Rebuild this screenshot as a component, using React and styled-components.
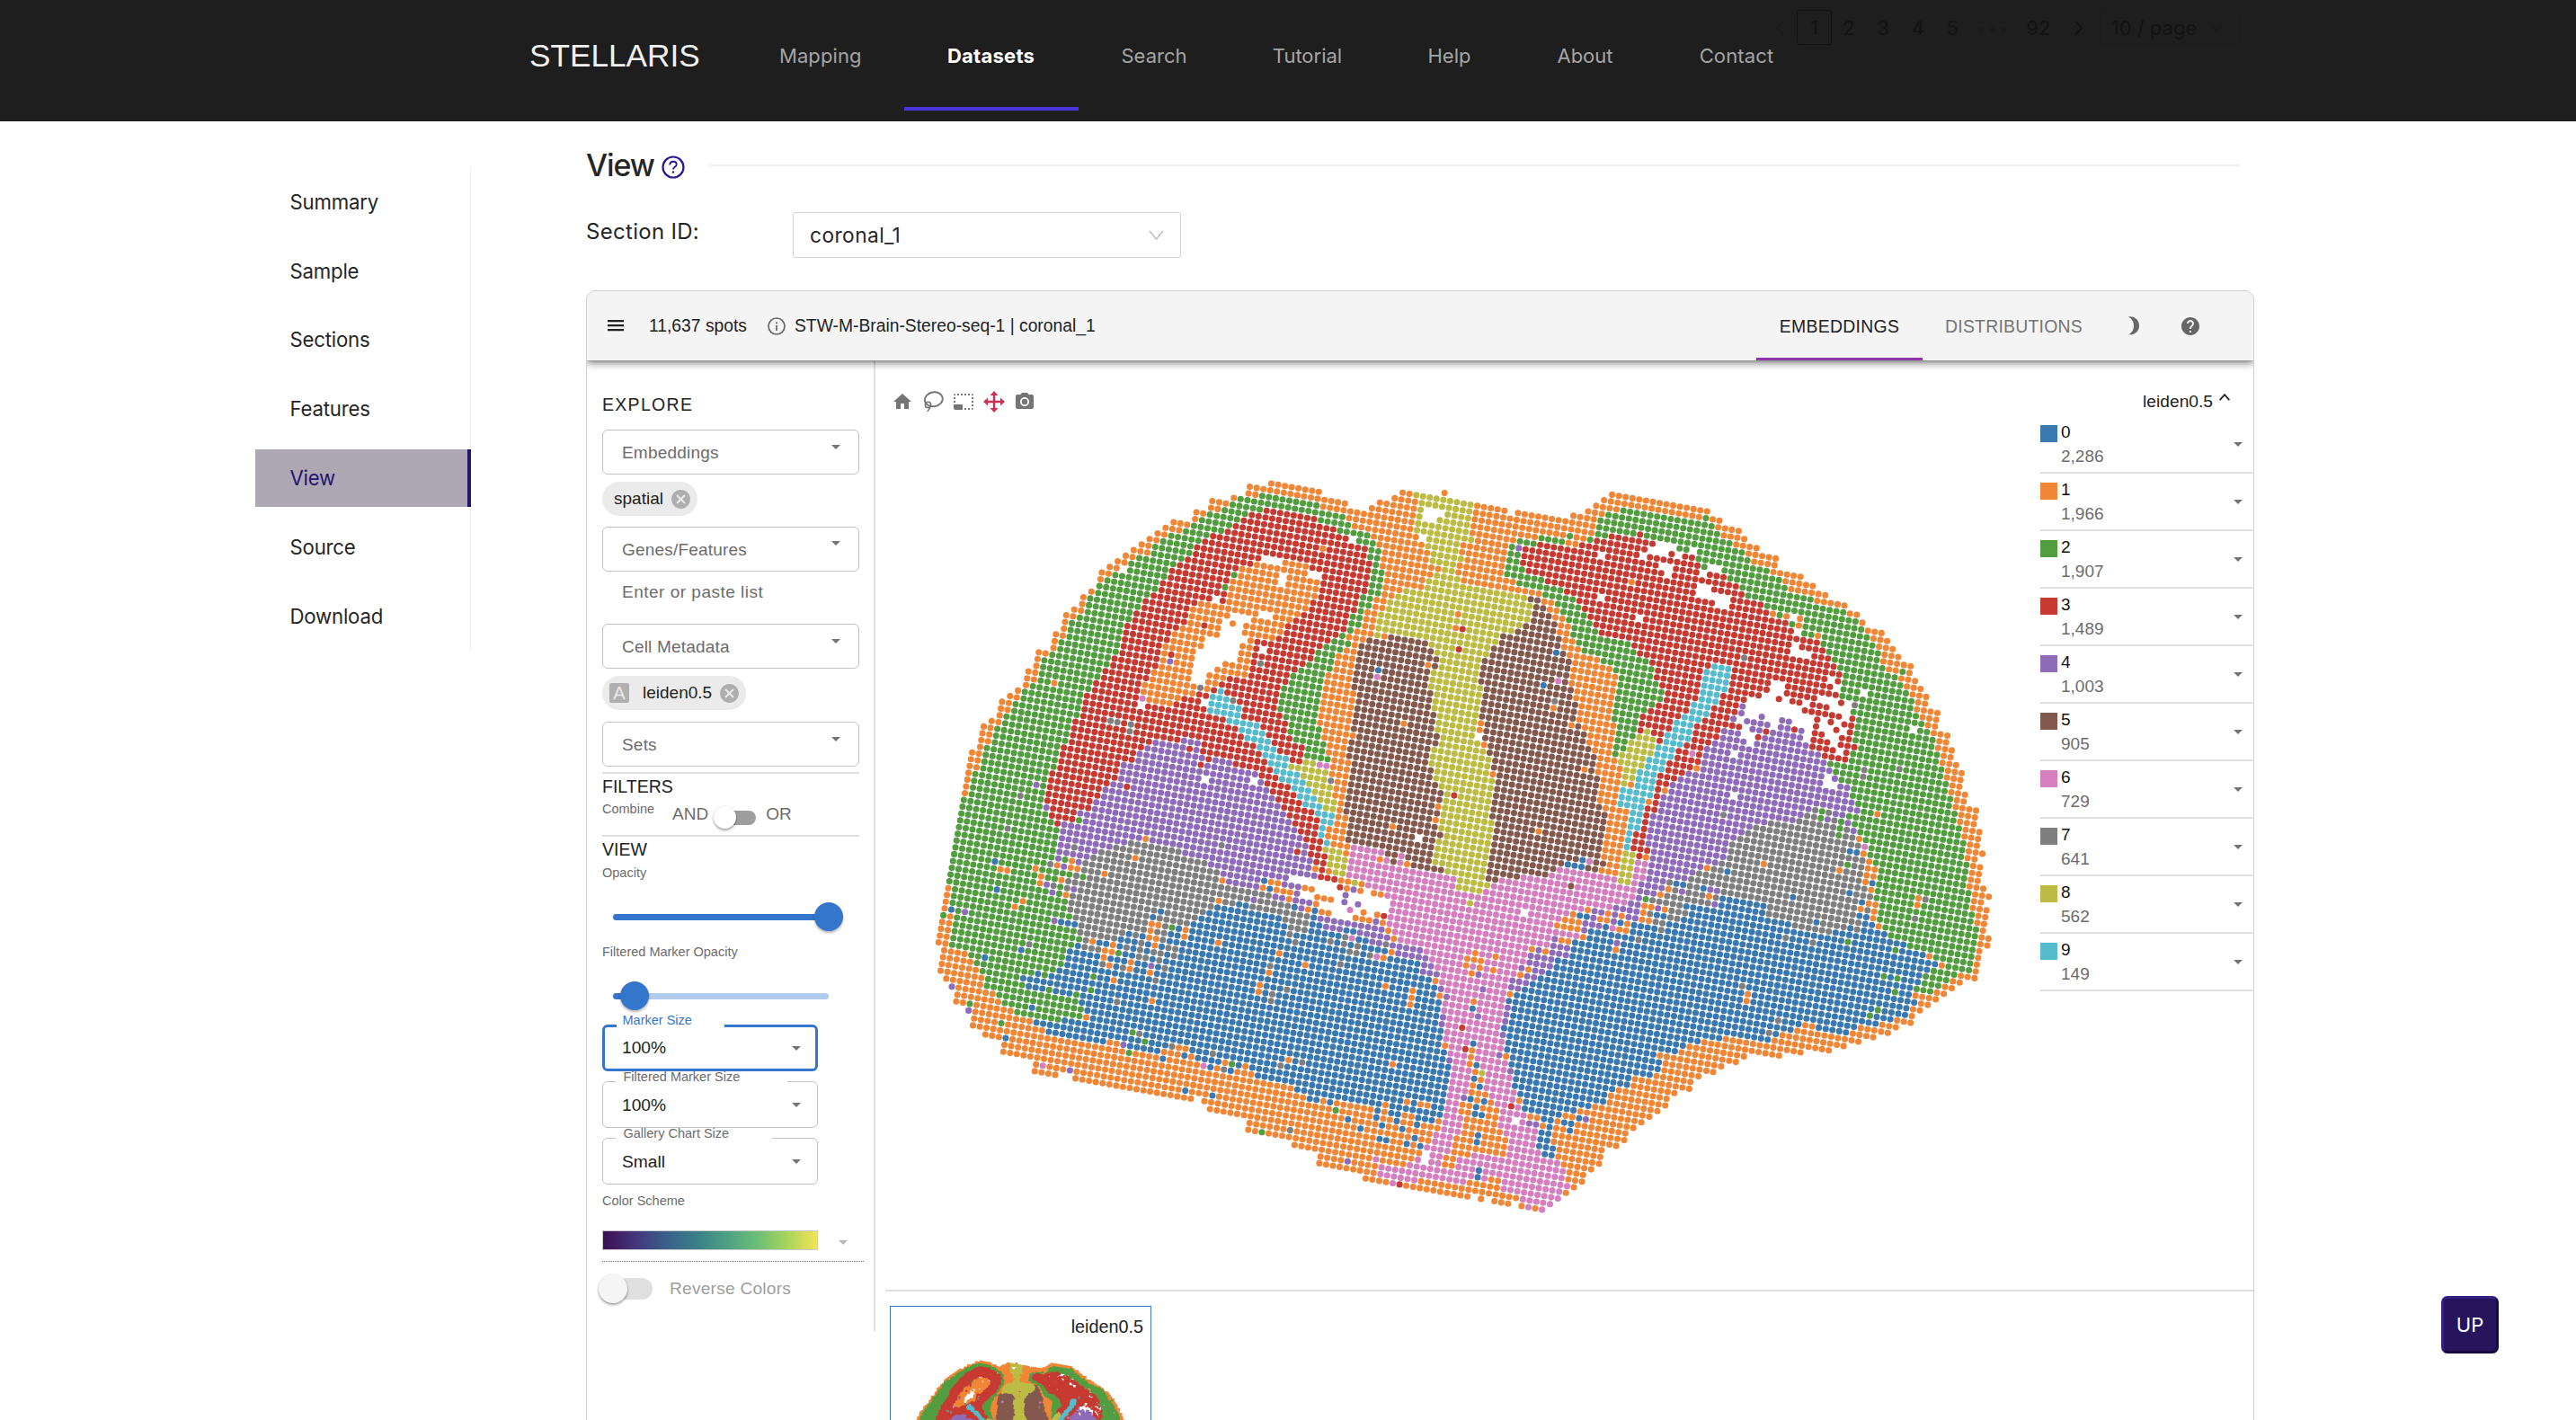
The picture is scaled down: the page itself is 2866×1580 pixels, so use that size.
import React, { useMemo } from 'react';
import styled, { createGlobalStyle, css } from 'styled-components';
import { MdHome, MdPhotoCamera, MdPhotoSizeSelectSmall, MdHelp, MdCancel } from 'react-icons/md';

/* ------------------------------------------------------------------ */
/* Spatial data: spots on a rotated square lattice, coloured by cluster */
/* ------------------------------------------------------------------ */

const CLUSTERS = [
  { id: 0, color: '#3a78b0', count: '2,286' },
  { id: 1, color: '#f08636', count: '1,966' },
  { id: 2, color: '#529d3f', count: '1,907' },
  { id: 3, color: '#c63a32', count: '1,489' },
  { id: 4, color: '#8f6cb9', count: '1,003' },
  { id: 5, color: '#84594d', count: '905' },
  { id: 6, color: '#d57fbf', count: '729' },
  { id: 7, color: '#7f7f7f', count: '641' },
  { id: 8, color: '#bcbc45', count: '562' },
  { id: 9, color: '#56bbcc', count: '149' },
];

// Slide coordinates are split in four fields; these are the field offsets.
const A = [0, 0];
const B = [1470, 0];
const C = [0, 1260];
const D = [1470, 1260];

const pts = (text, [ox, oy] = A) =>
  text
    .trim()
    .split(/\s+/)
    .map((p) => {
      const [x, y] = p.split(',').map(Number);
      return [x + ox, y + oy];
    });

const OUTLINE = [
  ...pts('150,1373 157,1330 167,1238 174,1190 182,1148 187,1124 190,1080 196,1034 203,1010 227,970 233,925 256,905 280,862 284,841 306,822 327,804 352,764 356,740 378,720 384,677 402,680 424,660 430,617 452,600 459,552 480,534 502,515 505,492 527,473 549,455 553,432 556,410 578,391 599,372 620,354 642,335 664,317 686,298 708,279 730,261 752,242 790,250 810,232 814,209 833,212 852,195 857,172 893,180 915,160 935,165 955,147 958,125 996,131 1018,114 1147,142 1144,163 1222,180 1218,203 1270,213 1292,195 1314,176 1353,160 1376,144 1395,147 1413,150'),
  ...pts('17,168 54,176 91,183 127,192 147,195 185,204 200,228 220,212 275,223 350,238 372,221 410,207 433,187 455,169 477,150 737,206 733,229 770,237 767,258 823,271 820,293 838,298 873,328 870,350 924,363 921,386 920,408 992,424 989,447 1025,455 1022,478 1060,487 1057,508 1110,521 1107,543 1144,551 1160,577 1175,605 1212,612 1227,638 1242,665 1258,692 1255,714 1291,722 1288,746 1303,773 1318,799 1334,825 1331,848 1328,870 1364,879 1358,925 1355,946 1392,955 1388,976 1403,1004 1400,1027 1415,1053 1430,1080 1424,1126 1440,1153 1437,1174 1434,1197 1470,1205 1464,1250 1479,1277 1474,1322 1488,1350 1465,1347', B),
  ...pts('1465,105 1481,135 1475,180 1489,206 1504,234 1485,253 1498,278 1492,323 1487,368 1504,372 1500,396 1482,392 1478,437 1468,483 1466,506 1447,501 1425,519 1407,517 1403,539 1381,557 1360,576 1338,594 1316,612 1294,631 1290,655 1268,650 1250,668 1229,688 1210,684 1189,702 1170,698 1148,717 1130,713 1108,732 1072,724 1069,747 1012,737 991,753 953,745 933,763 860,749 837,766 815,786 797,782 775,800 757,796 753,818 735,814 712,833 690,851 687,874 669,870 647,888 626,908 622,931 601,949 580,968 557,987 535,1006 513,1024 510,1046 489,1065 470,1061 451,1079 445,1103 442,1125 420,1143 398,1162 395,1184 373,1203 351,1222 330,1241 308,1259 286,1278 230,1266 193,1257 156,1250 119,1242 82,1235 0,1218', D),
  ...pts('1404,1202 1275,1175 1278,1151 1149,1125 1152,1101 1137,1076 1081,1063 1066,1036 1010,1025 955,1012 961,967 850,942 835,915 800,908 484,840 470,815 451,810 430,828 374,816 376,794 362,767 288,750 291,728 275,703 238,694 224,670 204,662 208,640 192,613 195,592 158,583 162,560 147,535 131,507 116,481 126,411 110,386 126,273 137,203 140,183 153,92', C),
];

const GREEN_LEFT = pts('178,1170 202,1130 208,1085 232,1040 240,1000 263,970 268,935 285,915 292,890 320,850 325,828 345,790 370,770 388,750 398,705 420,680 445,645 470,620 472,580 492,560 515,535 520,497 548,455 570,438 597,395 618,378 655,365 680,345 700,325 720,305 740,290 780,272 805,255 825,235 850,215 890,200 905,185 935,165 980,150 1100,175 1107,157 1150,185 1160,212 1215,225 1230,255 1285,285 1300,312 1312,345 1322,400 1310,480 1288,525 1262,560 1252,605 1215,625 1232,650 1188,690 1178,740 1158,780 1147,860 1147,930 1168,1000 1178,1038 1108,1030 800,1100 445,1290 470,1370 480,1410 475,1450 470,1480 468,1510 478,1545 490,1600 500,1650 480,1680 450,1720 520,1868 515,1895 440,1906 380,1902 325,1885 290,1860 280,1828 258,1805 240,1790 230,1750 214,1720 197,1692 180,1665 150,1655 150,1600 152,1560 140,1535 150,1490 132,1445 145,1350');

const RED_LEFT = pts('1000,196 1140,225 1172,258 1225,290 1280,325 1288,380 1278,440 1276,485 1252,500 1246,545 1226,575 1217,607 1178,637 1150,657 1140,690 1110,712 1085,740 1066,770 1040,790 1036,850 1046,890 1062,918 1046,950 1072,965 1107,1000 1100,1042 1150,1230 1172,1360 1165,1400 1195,1437 1212,1465 1150,1430 1100,1300 1000,1140 700,1120 500,1215 470,1258 430,1252 400,1180 403,1130 413,1080 440,1040 443,1000 465,960 475,905 497,880 502,830 530,780 555,750 578,710 605,660 622,620 620,585 648,550 662,520 688,480 712,460 738,420 760,380 785,360 808,335 835,300 870,285 900,262 935,235 955,215');

const RED_RIGHT = pts('275,312 350,327 410,318 440,300 475,285 555,280 590,310 640,342 690,355 728,408 772,422 822,450 838,495 888,515 905,545 955,576 972,625 1047,642 1068,690 1088,720 1102,750 1092,800 1107,850 1132,900 1132,940 1143,995 1115,1040 1055,1028 990,1000 760,985 718,1000 716,1045 672,1102 640,1112 612,1150 602,1200 585,1260 572,1300 580,1340 552,1362 528,1332 545,1270 570,1200 590,1150 600,1060 640,960 605,975 552,940 556,892 600,860 622,832 620,800 598,760 582,715 552,685 528,650 490,625 440,610 420,565 385,520 360,480 300,445 235,410 222,380 232,330', B);

const REGIONS = [
  { c: 2, p: GREEN_LEFT },
  {
    c: 2,
    p: [
      ...pts('350,292 280,292 222,300 203,325 190,370 188,418 222,458 290,468 288,490 322,520 352,560 368,612 382,650 398,678 450,705 485,735 490,800 484,880 480,940 483,1020 515,1000 532,960 800,1000 1080,1120 1130,1200 1150,1290', B),
      ...pts('1175,90 1195,140 1195,200 1200,300 1215,345 1262,385 1295,402 1342,430 1385,462 1330,480 1325,515 1303,545 1345,552 1392,525 1425,497 1452,480 1464,410 1478,350 1462,300 1452,240 1447,180 1447,130 1442,60', D),
      ...pts('1418,1220 1403,1180 1400,1130 1385,1085 1367,1040 1360,990 1342,945 1320,910 1300,850 1280,812 1262,770 1240,745 1212,710 1200,665 1175,625 1152,577 1110,545 1040,522 1025,500 970,472 940,440 900,402 850,375 840,340 800,310 765,285 735,225 700,244 505,200 465,213 442,240 436,262 422,280 405,300 398,325 375,310', B),
    ],
  },
  { c: 3, p: RED_LEFT },
  { c: 3, p: RED_RIGHT },
  { c: 1, p: pts('360,300 395,285 385,318 355,322', B) },
  { c: 1, p: pts('975,378 1060,372 1130,395 1154,440 1152,482 1132,505 1112,540 1085,572 1050,602 1020,630 975,640 962,670 945,762 905,765 872,790 840,808 790,822 740,852 680,845 663,820 678,770 706,730 718,670 732,640 760,598 792,570 798,520 850,508 898,512 902,460 908,420 950,392') },
  { c: 8, p: pts('1408,140 1487,160 1515,172 1570,186 1568,205 1562,245 1560,280 1572,300 1535,320 1537,370 1520,410 1530,440 1608,462 1720,488 1730,560 1690,600 1672,625 1645,630 1612,665 1598,705 1592,760 1590,830 1592,900 1578,960 1605,1000 1615,1050 1622,1130 1610,1160 1622,1200 1628,1280 1615,1330 1608,1400 1615,1460 1590,1475 1522,1465 1498,1412 1460,1380 1460,1300 1480,1230 1482,1150 1455,1100 1450,1050 1462,960 1460,900 1443,840 1450,760 1470,700 1450,650 1345,622 1298,622 1306,560 1332,515 1355,490 1378,468 1440,460 1438,430 1475,400 1452,370 1440,330 1450,290 1410,270 1408,240 1420,200 1413,170') },
  { c: 5, p: pts('1338,622 1445,640 1456,672 1474,690 1468,722 1456,760 1450,830 1468,885 1472,960 1450,1050 1458,1100 1486,1145 1480,1200 1462,1240 1486,1290 1458,1330 1462,1380 1480,1392 1485,1412 1400,1402 1385,1370 1330,1355 1222,1322 1225,1260 1218,1185 1228,1110 1240,1060 1224,1010 1240,940 1247,890 1240,800 1243,720 1252,675 1275,628 1330,642') },
  { c: 5, p: pts('1718,492 1745,500 1782,545 1798,580 1802,640 1820,680 1837,705 1830,790 1855,850 1855,900 1878,945 1878,990 1905,1030 1907,1080 1912,1130 1912,1180 1930,1220 1922,1280 1912,1340 1930,1380 1900,1405 1840,1392 1822,1412 1765,1425 1705,1422 1630,1465 1602,1440 1610,1370 1620,1280 1612,1170 1628,1120 1615,1040 1605,990 1587,960 1598,930 1588,890 1597,830 1586,770 1592,710 1618,670 1640,625 1695,600 1735,560') },
  { c: 8, p: pts('1100,1040 1140,1045 1182,1075 1190,1170 1192,1205 1165,1200 1140,1150 1110,1110 1062,1065') },
  { c: 8, p: pts('1162,1328 1190,1335 1232,1358 1232,1428 1190,1420 1172,1380') },
  { c: 8, p: pts('568,935 592,960 598,1000 560,1052 532,1115 500,1120 498,1060 490,1030 525,980 548,945', B) },
  { c: 8, p: pts('505,82 540,92 532,150 522,195 492,188 500,130', D) },
  { c: 9, p: pts('880,795 850,820 826,865 900,890 900,912 938,950 960,975 985,1002 1008,1055 1042,1082 1045,1108 1080,1130 1098,1170 1128,1210 1150,1250 1150,1290 1175,1322 1168,1270 1190,1225 1150,1192 1135,1160 1112,1130 1104,1105 1092,1080 1052,1062 1068,1035 1030,1010 1010,972 995,940 985,920 945,905 938,860 900,838') },
  { c: 9, p: pts('750,715 802,732 795,785 765,845 740,885 705,915 685,970 645,1010 622,1065 595,1110 582,1158 560,1210 545,1265 525,1338 512,1335 522,1270 530,1205 495,1190 497,1132 540,1130 550,1080 572,1030 600,990 625,950 665,890 695,855 718,810 722,745', B) },
  { c: 4, p: pts('700,965 740,985 792,962 825,985 835,1035 892,1035 930,1065 985,1085 1010,1130 1040,1190 1068,1240 1088,1272 1112,1310 1112,1340 1132,1380 1140,1430 1142,1470 1140,1510 1115,1540 1060,1525 1010,1515 970,1475 930,1465 880,1430 870,1410 830,1385 780,1360 640,1320 500,1380 440,1400 420,1385 438,1330 448,1270 490,1240 485,1215 528,1200 535,1170 560,1130 600,1100 608,1050 652,1045 652,1010 680,985') },
  { c: 4, p: [...pts('775,935 825,945 842,985 885,958 925,945 960,950 1000,975 1042,1008 1055,1050 1090,1100 1125,1120 1132,1200 1150,1290 1095,1300 1000,1280 800,1360', B), ...pts('780,110 690,165 670,190 600,215 560,250 550,310 520,355 400,352 395,290 485,262 545,230 548,190 575,165 572,130', D), ...pts('576,1340 572,1290 590,1220 615,1150 650,1112 700,1060 722,1035 722,1000 760,980 762,955', B)] },
  { c: 7, p: pts('630,1305 772,1322 780,1362 830,1370 878,1412 885,1440 925,1472 960,1462 1002,1480 1068,1515 1065,1530 1112,1565 1110,1600 1085,1650 1060,1620 1000,1580 800,1620 700,1640 600,1670 510,1665 492,1615 485,1570 462,1550 460,1510 460,1440 490,1400 525,1360 590,1325') },
  { c: 7, p: [...pts('900,1240 985,1240 1030,1195 1072,1205 1105,1240 1125,1290', B), ...pts('1160,60 1165,150 1152,190 1182,230 1150,300 1090,335 1060,355 970,345 660,310 600,325 560,300 590,260 628,215 682,185 705,150 768,130 790,80 815,30 870,0', D)] },
  { c: 0, p: [...pts('355,655 440,648 515,638 515,608 480,580 395,550 385,520 415,485 450,470 455,430 475,400 520,392 600,380 640,372 690,360 740,350 800,318 838,300 862,262 950,258 962,275 1028,295 1058,318 1062,345 1125,340 1135,280 1150,330 1250,345 1290,400 1380,425 1422,460 1452,490 1475,520 1475,640 1490,740 1506,800 1497,920 1482,960 1450,990 1430,1040 1412,975 1340,970 1330,945 1225,925 1130,915 1060,862 1000,840 950,815 855,800 790,760 720,750 680,745 640,740 590,720 500,710 410,685', C)] },
  { c: 0, p: pts('1195,330 1250,380 1322,425 1380,455 1330,480 1322,515 1300,545 1305,590 1290,622 1240,648 1190,660 1150,672 1110,690 1000,660 960,680 905,712 840,705 720,710 690,730 650,752 600,758 612,800 580,832 545,825 525,862 480,872 460,920 410,935 390,975 350,1015 330,985 300,975 245,960 220,900 208,850 200,800 190,750 180,680 192,620 188,580 205,555 268,510 280,470 320,440 358,390 410,368 430,350 520,352 530,318 560,310 620,325 672,300 700,265 760,265 800,240 888,260 905,305 950,325 970,350 1080,350 1145,320 1145,290 1185,300', D) },
  { c: 0, p: pts('282,1008 305,1015 312,1065 335,1095 308,1125 290,1095 275,1065', D) },
  { c: 4, p: pts('1145,1562 1220,1575 1275,1590 1312,1550 1320,1590 1345,1635 1430,1665 1455,1712 1475,1760 1445,1770 1415,1715 1380,1690 1290,1655 1250,1610 1150,1592') },
  {
    c: 6,
    p: [
      ...pts('1235,65 1300,75 1340,95 1375,95 1395,130 1455,145 1520,172 1530,212 1590,220', C),
      ...pts('130,200 175,180 235,168 300,160 330,140 430,148 495,165 495,195 530,190 545,110 565,95 572,120 560,185 540,210 545,230 515,250 470,270 400,275 340,290 335,340 405,365 340,375 315,365 300,395 245,400 240,440 220,470 215,510 190,540 185,580 185,640 178,700 190,800 205,850 215,900 240,960 270,1000 275,1060 290,1100 335,1120 350,1160 365,1195 340,1240 310,1262 286,1285 235,1262 215,1225 175,1215 160,1178 90,1180 20,1200 0,1190', D),
      ...pts('1520,1200 1480,1175 1410,1190 1340,1198 1305,1170 1310,1130 1385,1130 1440,1110 1440,1060 1455,1030 1485,990 1497,930 1510,800 1492,740 1492,640 1480,580 1470,500 1465,450 1430,430 1420,405 1355,380 1330,320 1340,270 1330,230 1225,160', C),
    ],
  },
  { c: 1, p: pts('98,722 112,800 128,860 145,915 165,950 165,1000 192,1030 188,1095 110,1095 50,1108 35,1145 0,1140 15,1100 40,1080 45,1040 62,1020 65,960 60,930 85,900 90,850 85,790', D) },
];

const GAPS = [
  pts('1430,195 1475,195 1492,212 1468,238 1445,240 1428,225'),
  pts('1425,280 1442,272 1455,288 1442,312 1422,310'),
  pts('838,635 862,628 885,600 880,572 900,555 945,548 995,535 1025,560 1010,575 965,570 938,590 925,618 950,632 933,650 928,705 885,705 870,738 838,745 832,788 816,788 795,740 806,725 810,685 838,655'),
  pts('985,362 1045,368 1046,382 1025,392 1005,385'),
  pts('1036,412 1060,412 1058,452 1036,455'),
  pts('1118,408 1158,402 1152,432 1115,428'),
  pts('602,400 625,392 625,415 607,412'),
  pts('855,493 880,490 876,516 855,515'),
  pts('1228,295 1250,290 1248,312 1234,310'),
  pts('985,660 1005,665 1002,688 985,685'),
  pts('656,848 672,848 668,866 656,864'),
  pts('830,838 850,832 843,858 828,855'),
  pts('828,1095 846,1095 846,1114 828,1114'),
  pts('962,1098 980,1098 980,1116 962,1116'),
  pts('1410,1290 1428,1290 1428,1308 1410,1308'),
  pts('840,845 880,830 905,808 915,775 945,782 950,820 985,840 1000,880 1030,900 1025,960 1000,975 985,940 950,895 925,935 900,930 870,920 840,915 820,915 820,870', B),
  pts('832,915 860,930 868,980 850,992 838,965', B),
  pts('592,305 650,328 640,342 600,360 558,358 555,345 585,330', B),
  pts('605,385 640,382 638,422 615,412', B),
  pts('708,452 742,460 772,482 798,500 795,530 765,525 745,500 708,485', B),
  pts('735,382 775,388 772,412 730,402', B),
  pts('690,318 712,335 708,350 688,342', B),
  pts('970,545 990,560 985,600 995,625 978,625 970,590', B),
  pts('962,640 990,660 1022,672 1022,698 985,690 958,672', B),
  pts('440,340 462,345 458,362 438,362', B),
  pts('432,482 455,488 452,505 430,500', B),
  pts('545,552 562,556 560,572 542,570', B),
  pts('1160,800 1178,805 1172,822 1158,818', B),
  pts('1290,930 1310,935 1304,952 1288,948', B),
  pts('100,955 120,960 120,980 105,978', B),
  pts('800,1010 822,1012 818,1034 798,1030', B),
  pts('798,1148 820,1150 816,1170 798,1168', B),
  pts('1055,1055 1070,1075 1092,1120 1070,1128 1050,1110', B),
  pts('228,275 250,280 248,298 226,296', D),
  pts('202,970 226,972 224,992 202,990', D),
  pts('1075,165 1130,178 1195,190 1202,212 1235,200 1290,222 1330,245 1336,275 1320,302 1300,285 1240,312 1222,300 1185,300 1175,275 1145,265 1130,235 1090,235 1090,215 1135,200 1118,188 1065,182', C),
  pts('1425,1085 1448,1085 1444,1125 1428,1125', C),
];

// [colour choices, probability, polygon] - mixed borders between clusters; -1 empties the spot
const MIXES = [
  [[-1], 0.38, pts('1065,715 1100,760 1120,830 1135,1010 1060,1010 1030,960 1040,900 1000,880 1000,830 1050,800', B)],
  [[-1], 0.16, pts('640,330 690,380 800,430 810,500 700,440 620,400', B)],
  [[7, 7, 0], 0.4, pts('500,375 600,360 760,350 760,440 640,470 500,460', C)],
  [[7, 7, 2, 4], 0.14, pts('510,375 800,310 780,430 700,500 560,470', C)],
  [[4, 2, 7], 0.3, pts('420,90 480,90 470,230 390,230 380,160', C)],
  [[0, 7], 0.3, pts('1030,280 1120,270 1125,400 1070,390', C)],
  [[7, 4, 6], 0.3, pts('1180,330 1340,380 1340,440 1200,430', C)],
  [[0], 0.22, pts('330,470 420,470 420,640 340,620 320,560', C)],
  [[2], 0.4, pts('400,500 500,560 520,640 400,640', C)],
  [[0, 1], 0.25, pts('580,700 800,740 1000,820 1200,910 1200,930 900,830 600,740', C)],
  [[0], 0.25, pts('1200,930 1450,940 1430,1100 1330,1070 1200,960', C)],
  [[1], 0.2, pts('1130,890 1450,920 1430,1040 1200,960', C)],
  [[0], 0.35, pts('90,800 150,900 160,1020 110,1060 70,1000 70,900', D)],
  [[4], 0.85, pts('318,370 370,400 372,435 308,465 270,520 240,535 205,555 190,540 225,470 248,430 255,400 300,400', D)],
  [[0, 7, 4], 0.35, pts('560,190 700,180 880,220 900,290 760,270 600,310', D)],
  [[0, 1, 4, 6], 0.3, pts('400,275 520,280 530,350 400,350 330,340 345,285', D)],
  [[0, 4, 7], 0.22, pts('1120,80 1190,90 1195,280 1130,330 1140,200', D)],
  [[7, 0], 0.35, pts('930,310 1150,300 1150,350 960,365', D)],
  [[1, 0], 0.5, pts('280,965 390,940 400,1000 350,1030 300,1020', D)],
  [[5, 6, 6], 0.5, pts('1290,90 1400,95 1400,125 1300,120', C)],
  [[4, 2], 0.35, pts('1070,1060 1120,1110 1180,1290 1100,1290 1040,1230', B)],
];

const RIM = [
  pts('0,1192 20,1207 60,1195 90,1178 165,1175 180,1212 225,1238 225,1262 150,1275 -60,1245', D),
  pts('1395,1192 1420,1172 1492,1180 1508,1206 1570,1212 1570,1240 1390,1215', C),
  pts('1260,1165 1310,1172 1345,1186 1335,1200 1260,1185', C),
];

const SINGLES = [
  [1, pts('1490,145 1158,330 427,779 1446,718 1379,914 1349,1260 1474,1192 1240,955 912,580 975,548')],
  [1, pts('57,550 50,597 530,441 318,862 366,920 402,1068 707,1064 1200,1217 1150,1300 277,1275 915,548 952,557 989,565 986,588 1038,621', B)],
  [1, pts('890,125 1097,145 741,233 1155,273 620,275 486,410 846,558 844,581 1313,238 1310,262 104,421 160,433 82,440 100,443 119,447 79,462 116,470 153,477 94,490 99,583 372,292 349,310 386,318 328,329 467,290 445,307 463,311 503,298 518,324 497,342 515,345 133,895 230,1266 267,1274 1486,90', D)],
  [1, pts('676,42 647,104 563,157 884,180 874,247 279,140 298,146 376,138 434,128 474,114 471,135 392,166 387,188 446,177 458,227 340,248 319,266 692,324 710,327 689,347 686,369 704,372 701,396 784,345 781,367 873,387 531,382 586,395 565,412 583,415 561,437 577,462 634,452 631,475 687,487 588,512 693,581 1040,423 1110,461 1011,487 986,527 983,550 1064,779 1403,547 1400,571 1397,594 1329,532 1349,793 1345,418 1324,437 1464,515 1553,440 1549,463 998,204 1018,184 1036,188 1032,211 1050,215 1069,219 1065,242 1108,203 1128,208 1155,284 1248,304 1313,107 1387,124 1143,235 1162,239 1180,243 1260,213 1224,206 1270,285', C)],
  [0, pts('1309,737')],
  [0, pts('325,680 290,787', B)],
  [0, pts('264,114 269,210 146,275 335,410 237,436 998,181 1013,207 716,284 695,301 448,320 466,322 482,326 629,357 625,380 607,376 549,387 783,880 857,897 294,705 1139,280 1083,267', C)],
  [0, pts('397,111 356,126 374,128 393,134 792,149 653,188 671,192 727,205 1186,188 1143,86 1124,221 970,235 104,795 100,840 97,723 96,606 114,1147 110,1170 108,1052', D)],
  [2, pts('917,418 891,460 492,1238')],
  [2, pts('362,290 967,583 935,553 1268,742', B)],
  [2, pts('504,166 640,686 673,716 629,753 911,792 1193,945 992,1020 281,655 195,590 533,500 526,545 124,295 148,393', C)],
  [2, pts('568,240 1120,384 1250,411 1218,498 1256,507 1248,551 1202,611 1180,629 1119,125 1095,30', D)],
  [3, pts('835,587 744,685 1530,667 1539,600 1516,1156 624,1125 825,1052 797,998 1090,1343')],
  [3, pts('932,832 968,842 756,468 553,283', B)],
  [3, pts('1538,671 1547,742 1368,1193 1205,201 1325,298', C)],
  [3, pts('202,933', D)],
  [4, pts('742,707 377,1119 405,1195 454,1253')],
  [4, pts('223,329 830,858 830,880 808,898 845,908 862,912 885,890 880,912 900,918 940,905 958,908 935,925 955,930 993,938 990,960 880,937 862,935 915,945 1070,1072', B)],
  [4, pts('182,284 147,534 192,614 469,814 615,727 971,244 1226,1117 1543,905 426,314 420,218 480,208 690,463 1220,228 1217,250 1254,259 1242,209 1480,540 1495,570 1485,635 1483,658 1503,780', C)],
  [4, pts('490,387 112,634 112,494 124,543 33,779 73,904 405,977 250,990 270,995 200,815 170,762 180,695 187,650 189,627 192,603', D)],
  [6, pts('667,831 1306,759 1150,1052 1168,1057')],
  [6, pts('330,772 695,1016 1166,1327', B)],
  [6, pts('394,797 833,797 1418,1110 1303,1110 1238,372 1233,278', C)],
  [6, pts('416,114 230,1245 248,1270', D)],
  [7, pts('580,907 598,910 635,918 631,940 988,713 825,796 913,838 333,1157 300,1266 1180,1106 883,1322 481,1329')],
  [7, pts('837,695 321,840 1139,853 1261,1068 1164,1070 1161,1092 781,1220', B)],
  [7, pts('1014,464 1060,545 1020,560 1017,581 858,757 888,809 1043,797 1102,786 1069,1013 748,733 657,690 597,583 703,513 727,471 752,430 1206,458 1287,429 1231,417 1219,368 1179,382 357,392 1111,345 1085,386 1073,362', C)],
  [7, pts('1331,243 1303,306 832,532 930,647 904,687 550,377 611,345 950,370 1024,386', D)],
  [8, pts('1245,187', C)],
  [8, pts('90,255 122,822', D)],
  [5, pts('366,197', D)],
  [-1, pts('212,1262 138,1246 100,1239', D)],
  [-1, pts('817,912 466,836 448,832', C)],
];

const ORIGIN = [1018, 114];
const STEP = [18.49, 3.993];
const DOWN = [-3.261, 22.64];

const contains = (poly, x, y) => {
  let hit = false;
  for (let i = 0, j = poly.length - 1; i < poly.length; j = i++) {
    const [xi, yi] = poly[i];
    const [xj, yj] = poly[j];
    if (yi > y !== yj > y && x < ((xj - xi) * (y - yi)) / (yj - yi) + xi) hit = !hit;
  }
  return hit;
};

const onTissue = (x, y) =>
  contains(OUTLINE, x, y) ||
  [[6, 0], [-6, 0], [0, 7], [0, -7], [5, 5], [-5, 5], [5, -5], [-5, -5]].some(([dx, dy]) => contains(OUTLINE, x + dx, y + dy));

const randomFrom = (seed) => {
  let s = seed;
  return () => {
    s = (s * 1664525 + 1013904223) % 4294967296;
    return s / 4294967296;
  };
};

const spotAt = (i, j) => [ORIGIN[0] + i * STEP[0] + j * DOWN[0], ORIGIN[1] + i * STEP[1] + j * DOWN[1]];

const nearestSpot = ([x, y]) => {
  const det = STEP[0] * DOWN[1] - STEP[1] * DOWN[0];
  const dx = x - ORIGIN[0];
  const dy = y - ORIGIN[1];
  const i = Math.round((dx * DOWN[1] - dy * DOWN[0]) / det);
  const j = Math.round((STEP[0] * dy - STEP[1] * dx) / det);
  return `${i},${j}`;
};

function buildSpots() {
  const random = randomFrom(20);
  const spots = new Map();
  for (let j = -40; j < 120; j++) {
    for (let i = -70; i < 130; i++) {
      const [x, y] = spotAt(i, j);
      if (x < 90 || x > 3000 || y < 90 || y > 2570) continue;
      if (!onTissue(x, y)) continue;
      let c = 1;
      for (const r of REGIONS) if (contains(r.p, x, y)) c = r.c;
      for (const [choices, chance, poly] of MIXES) {
        if (contains(poly, x, y) && random() < chance) c = choices[Math.floor(random() * choices.length)];
      }
      if (RIM.some((p) => contains(p, x, y))) c = 1;
      if (c < 0 || GAPS.some((p) => contains(p, x, y))) continue;
      spots.set(`${i},${j}`, c);
    }
  }
  for (const [c, list] of SINGLES) {
    for (const p of list) {
      const key = nearestSpot(p);
      if (c < 0) spots.delete(key);
      else spots.set(key, c);
    }
  }
  const paths = CLUSTERS.map(() => []);
  spots.forEach((c, key) => {
    const [i, j] = key.split(',').map(Number);
    const [x, y] = spotAt(i, j);
    paths[c].push(`M${(1000 + x / 2.45).toFixed(1)} ${(500 + y / 3).toFixed(1)}h0`);
  });
  return paths.map((p) => p.join(''));
}

/* ------------------------------------------------------------------ */
/* Styles                                                               */
/* ------------------------------------------------------------------ */

const ui = `Inter, Roboto, sans-serif`;
const helv = `"Liberation Sans", Arial, sans-serif`;

const GlobalStyle = createGlobalStyle`
  *, *::before, *::after { box-sizing: border-box; }
  html, body { margin: 0; background: #fff; overflow: hidden; }
  body { font-family: ${ui}; color: #262626; }
  svg { display: block; flex: none; }
`;

const Page = styled.div`
  position: relative;
  width: 2866px;
  height: 1580px;
  overflow: hidden;
`;

const Header = styled.header`
  position: relative;
  display: flex;
  height: 135px;
  padding-left: 589px;
  background: #1e1e1e;
`;

const Logo = styled.div`
  width: 231px;
  font: 35.2px/123px ${helv};
  color: #f0f0f0;
`;

const Nav = styled.nav`
  display: flex;
  height: 123px;
`;

const NavItem = styled.a`
  width: ${(p) => p.$w}px;
  height: 123px;
  line-height: 125px;
  text-align: center;
  font-size: 22px;
  letter-spacing: ${(p) => p.$ls ?? 0}px;
  font-weight: ${(p) => (p.$active ? 700 : 400)};
  color: ${(p) => (p.$active ? '#fff' : '#a5a5a5')};
  border-bottom: 4px solid ${(p) => (p.$active ? '#4c35de' : 'transparent')};
`;

const Pager = styled.div`
  position: absolute;
  left: 1961px;
  top: 11px;
  display: flex;
  color: #131313;
  font-size: 22px;
  line-height: 38px;
  text-align: center;
`;

const PagerItem = styled.span`
  display: flex;
  align-items: center;
  justify-content: center;
  width: ${(p) => p.$w ?? 38.4}px;
  height: 39px;
  border: ${(p) => (p.$boxed ? '1.5px solid #121212' : '1.5px solid transparent')};
  border-radius: 3px;
  opacity: ${(p) => (p.$faint ? 0.2 : 1)};
  line-height: 36px;
`;

const PagerSize = styled.span`
  display: flex;
  align-items: center;
  justify-content: space-between;
  width: 157px;
  height: 39px;
  margin-left: 4px;
  padding: 0 18px 0 12px;
  border: 1px solid #1b1b1b;
  border-radius: 3px;
`;

const Body = styled.div`
  display: flex;
  padding-left: 284px;
`;

const Side = styled.nav`
  display: flex;
  flex-direction: column;
  gap: 12.8px;
  width: 240px;
  height: 538px;
  margin-top: 51px;
  padding-top: 6.8px;
  border-right: 1px solid #eee;
`;

const SideItem = styled.a`
  height: 64px;
  width: 240px;
  padding-left: 38.5px;
  font-size: 22.2px;
  line-height: 63.5px;
  letter-spacing: -0.2px;
  flex: none;
  color: #262626;
  border-right: 4px solid transparent;
  ${(p) =>
    p.$active &&
    css`
      color: #241571;
      background: #ada8b3;
      border-color: #241571;
    `}
`;

const Main = styled.main`
  width: 1856px;
  margin-left: 128px;
`;

const TitleRow = styled.div`
  display: flex;
  align-items: center;
  height: 101px;
  padding-right: 16px;
`;

const Title = styled.h2`
  width: 84px;
  margin: 0 0 4px;
  font-size: 34px;
  font-weight: 550;
  line-height: 94px;
  letter-spacing: -1.1px;
`;

const TitleIcon = styled.span`
  width: 53px;
  margin-top: 1px;
`;

const Rule = styled.div`
  flex: 1;
  height: 2px;
  margin-bottom: 4px;
  background: #f0f0f0;
`;

const FormRow = styled.div`
  display: flex;
  height: 87px;
`;

const FormLabel = styled.label`
  width: 230px;
  font-size: 24px;
  line-height: 43px;
  letter-spacing: 0.3px;
`;

const SelectBox = styled.div`
  display: flex;
  align-items: center;
  justify-content: space-between;
  width: 432px;
  height: 51px;
  padding: 0 18px;
  border: 1px solid #d2d2d2;
  border-radius: 3px;
  font-size: 22.7px;
  letter-spacing: 0.45px;
`;

const Panel = styled.section`
  width: 1856px;
  height: 1300px;
  border: 1px solid #cfcfcf;
  border-radius: 10px;
  font-family: ${helv};
  overflow: hidden;
`;

const PanelBar = styled.div`
  position: relative;
  display: flex;
  align-items: center;
  height: 77px;
  padding: 0 58px 0 23px;
  background: #f4f4f4;
  box-shadow: 0 4px 8px rgba(0, 0, 0, 0.4), 0 1px 4px rgba(0, 0, 0, 0.2);
  font-size: 19.3px;
  color: #222;
`;

const Menu = styled.div`
  width: 46px;
`;

const Spots = styled.span`
  width: 132px;
`;

const Info = styled.span`
  width: 30px;
`;

const Tabs = styled.div`
  display: flex;
  align-self: stretch;
  margin-left: auto;
`;

const Tab = styled.div`
  width: ${(p) => p.$w}px;
  text-align: center;
  line-height: 78px;
  font-size: 19.4px;
  letter-spacing: ${(p) => p.$ls}px;
  color: ${(p) => (p.$active ? '#222' : '#747474')};
  border-bottom: 3px solid ${(p) => (p.$active ? '#8f36ab' : 'transparent')};
`;

const BarIcons = styled.div`
  display: flex;
  align-items: center;
  gap: 42px;
  margin-left: 24px;
  color: #666;
`;

const PanelBody = styled.div`
  display: flex;
`;

const Controls = styled.aside`
  display: flex;
  flex-direction: column;
  align-items: flex-start;
  width: 321px;
  height: 1080px;
  padding: 38px 0 0 17px;
  border-right: 2px solid #e0e0e0;
`;

const Heading = styled.div`
  font-size: 19.5px;
  line-height: 22px;
  margin-top: ${(p) => p.$mt ?? 0}px;
  letter-spacing: ${(p) => p.$ls ?? 0}px;
  color: #222;
`;

const Field = styled.div`
  display: flex;
  justify-content: space-between;
  width: 286px;
  height: 50px;
  margin-top: ${(p) => p.$mt}px;
  padding: 0 20px 0 21px;
  border: 1px solid #c2c2c2;
  border-radius: 6px;
  font-size: 19px;
  line-height: 50px;
  letter-spacing: 0.2px;
  color: #6c6c6c;
`;

const Arrow = styled.span`
  width: 0;
  height: 0;
  flex: none;
  margin-top: ${(p) => p.$mt ?? 0}px;
  border: 5.5px solid transparent;
  border-top-color: ${(p) => p.$color ?? '#757575'};
  border-bottom: 0;
`;

const Hint = styled.div`
  margin: 12px 0 0 22px;
  font-size: 19px;
  line-height: 22px;
  letter-spacing: 0.5px;
  color: #6c6c6c;
`;

const Chip = styled.div`
  display: flex;
  align-items: center;
  height: 38px;
  margin-top: ${(p) => p.$mt}px;
  padding: 0 6px 0 ${(p) => p.$pl}px;
  border-radius: 19px;
  background: #ebebeb;
  font-size: 19px;
  color: #222;
  svg { margin-left: 7px; color: #aeaeae; }
`;

const TypeBadge = styled.span`
  width: 22px;
  height: 22px;
  margin-right: 15px;
  border-radius: 2px;
  background: #b0b0b0;
  color: #ebebeb;
  font-size: 20px;
  line-height: 22px;
  text-align: center;
`;

const Line = styled.div`
  width: 286px;
  height: 2px;
  flex: none;
  margin-top: ${(p) => p.$mt}px;
  background: #e0e0e0;
`;

const Small = styled.div`
  margin-top: ${(p) => p.$mt ?? 0}px;
  font-size: 14.5px;
  line-height: 18px;
  color: #6c6c6c;
`;

const CombineRow = styled.div`
  display: flex;
  width: 286px;
  height: 43px;
  font-size: 19px;
  line-height: 39px;
  color: #6c6c6c;
`;

const CombineLabel = styled(Small)`
  width: 78px;
  line-height: 29px;
`;

const Switch = styled.span`
  display: flex;
  align-items: center;
  align-self: ${(p) => (p.$small ? 'flex-start' : 'center')};
  width: ${(p) => (p.$small ? 47 : 60)}px;
  height: ${(p) => (p.$small ? 25 : 32)}px;
  margin: ${(p) => (p.$small ? '11px 11px 0 6px' : '0 19px 0 -4px')};
  &::before {
    content: '';
    width: ${(p) => (p.$small ? 25 : 32)}px;
    height: ${(p) => (p.$small ? 25 : 32)}px;
    border-radius: 50%;
    background: ${(p) => (p.$small ? '#fff' : '#f5f5f5')};
    box-shadow: 0 2px 3px rgba(0, 0, 0, 0.35), 0 0 2px rgba(0, 0, 0, 0.1);
    z-index: 1;
  }
  &::after {
    content: '';
    flex: 1;
    height: ${(p) => (p.$small ? 16 : 24)}px;
    margin-left: -14px;
    border-radius: 12px;
    background: ${(p) => (p.$small ? '#9e9e9e' : '#e0e0e0')};
  }
`;

const Slider = styled.div`
  display: flex;
  align-items: center;
  width: 240px;
  height: 32px;
  margin: ${(p) => p.$mt}px 0 0 12px;
`;

const Filled = styled.span`
  width: ${(p) => p.$w}px;
  height: 7px;
  border-radius: 4px;
  background: #3476cc;
`;

const Knob = styled.span`
  width: 32px;
  height: 32px;
  margin: 0 -16px;
  border-radius: 50%;
  background: #3476cc;
  box-shadow: 0 2px 3px rgba(0, 0, 0, 0.3);
  flex: none;
  z-index: 1;
`;

const Rest = styled.span`
  flex: 1;
  height: 7px;
  border-radius: 4px;
  background: #b0cbee;
`;

const Outlined = styled.fieldset`
  display: flex;
  align-items: center;
  justify-content: space-between;
  width: 240px;
  height: ${(p) => (p.$focus ? 59.5 : 60)}px;
  margin: ${(p) => p.$mt}px 0 0;
  padding: ${(p) => (p.$focus ? 5 : 6)}px ${(p) => (p.$focus ? 16 : 18)}px 0 ${(p) => (p.$focus ? 19 : 21)}px;
  border: ${(p) => (p.$focus ? '3px solid #3476cc' : '1px solid #c2c2c2')};
  border-radius: 6px;
  font-size: 19.2px;
  color: #222;
  min-width: 0;
`;

const Legend = styled.legend`
  width: ${(p) => p.$w}px;
  height: 18px;
  margin-left: ${(p) => (p.$focus ? -6 : -7)}px;
  padding: 0 0 0 ${(p) => (p.$focus ? 6.5 : 8.5)}px;
  font-size: 14.5px;
  line-height: 6px;
  white-space: nowrap;
  color: ${(p) => (p.$focus ? '#3476cc' : '#6c6c6c')};
`;

const SchemeRow = styled.div`
  display: flex;
  align-items: center;
  gap: 23px;
  width: 291px;
  height: 49px;
  margin-top: 10px;
  padding-top: 2px;
  border-bottom: 1px dotted #777;
`;

const Gradient = styled.div`
  width: 240px;
  height: 22px;
  border: 1px solid #c9c9c9;
  background: linear-gradient(90deg, #3b0f54, #44357c 15%, #3a5c8a 28%, #3a8289 45%, #4fa184 58%, #69bd78 71%, #a2d35d 85%, #f5e456);
`;

const ReverseRow = styled.div`
  display: flex;
  align-items: center;
  height: 32px;
  margin-top: 14px;
  font-size: 19.2px;
  letter-spacing: 0.2px;
  color: #9e9e9e;
`;

const Workspace = styled.div`
  width: 1533px;
`;

const Stage = styled.div`
  display: flex;
  height: 1034px;
`;

const PlotColumn = styled.div`
  width: 1296px;
`;

const Tools = styled.div`
  display: flex;
  align-items: center;
  gap: 10px;
  height: 59px;
  padding: 33px 0 1px 18px;
  color: #757575;
`;

const LegendColumn = styled.div`
  width: 236px;
  padding-top: 33px;
  font-size: 19px;
`;

const LegendTitle = styled.div`
  display: flex;
  align-items: center;
  justify-content: flex-end;
  gap: 7px;
  height: 25px;
  margin-bottom: 4px;
  padding-right: 25px;
  color: #222;
  font-size: 19.2px;
  svg { margin-top: -9px; }
`;

const LegendRow = styled.div`
  display: flex;
  height: 64px;
  padding-top: 10px;
  border-bottom: 2px solid #dedede;
`;

const Swatch = styled.span`
  width: 19px;
  height: 19px;
  margin-right: 4px;
  background: ${(p) => p.$color};
`;

const LegendText = styled.div`
  flex: 1;
  color: #6c6c6c;
  line-height: 27px;
  margin-top: -6px;
  b { display: block; font-weight: 400; color: #111; }
`;

const RowArrow = styled(Arrow)`
  margin-right: 11px;
`;

const Gallery = styled.div`
  height: 200px;
  margin-left: 11px;
  padding: 16px 0 0 5px;
  border-top: 2px solid #dedede;
`;

const Card = styled.div`
  width: 291px;
  height: 260px;
  border: 1px solid #3f78bd;
`;

const CardTitle = styled.div`
  height: 40px;
  padding-right: 8px;
  text-align: right;
  font-size: 19.8px;
  line-height: 44px;
  color: #222;
`;

const UpButton = styled.button`
  position: absolute;
  left: 2716px;
  top: 1442px;
  width: 64px;
  height: 64px;
  padding: 0;
  border: 3px solid;
  border-color: #352083 #180a40 #180a40 #352083;
  border-radius: 7px;
  background: #26145c;
  color: #fff;
  font: 22px ${ui};
`;

/* ------------------------------------------------------------------ */
/* Icons                                                                */
/* ------------------------------------------------------------------ */

const Chevron = ({ w = 17, h = 11, color = '#bfbfbf', flip, sw = 1.6 }) => (
  <svg width={w} height={h} viewBox="0 0 17 11" fill="none" stroke={color} strokeWidth={sw}>
    <path d={flip ? 'M1 10L8.500 1.500L16 10' : 'M1 1L8.500 10L16 1'} />
  </svg>
);

const SideChevron = ({ left }) => (
  <svg width="10" height="16" viewBox="0 0 10 16" fill="none" stroke="currentColor" strokeWidth="1.800">
    <path d={left ? 'M9 1L1.500 8L9 15' : 'M1 1L8.500 8L1 15'} />
  </svg>
);

const QuestionIcon = () => (
  <svg width="26" height="26" viewBox="0 0 26 26" fill="none" stroke="#2b1a8c" strokeWidth="2.200">
    <circle cx="13" cy="13" r="11.500" />
    <path d="M9.300 10.400c0-2.300 1.600-3.700 3.700-3.700s3.700 1.400 3.700 3.300c0 2.600-3.700 2.800-3.700 5.500" strokeWidth="1.900" />
    <circle cx="13" cy="18.600" r="0.600" strokeWidth="1.300" />
  </svg>
);

const InfoIcon = () => (
  <svg width="20" height="20" viewBox="0 0 20 20" fill="none" stroke="#666" strokeWidth="1.700">
    <circle cx="10" cy="10" r="9" />
    <path d="M10 9v6M10 5.200v2" />
  </svg>
);

const MenuIcon = () => (
  <svg width="18" height="13" viewBox="0 0 18 13" fill="#222">
    <path d="M0 0h18v2.300H0zM0 5h18v2.300H0zM0 10h18v2.300H0z" />
  </svg>
);

const MoonIcon = () => (
  <svg width="17" height="21" viewBox="0 0 17 21" fill="#666">
    <path d="M2 .500C8.500-.500 14 4 14 10.400S8.500 21 2 20.200C6.500 18 8 14 8 10.400S6.500 3 2 .500z" />
  </svg>
);

const LassoIcon = () => (
  <svg width="24" height="24" viewBox="0 0 24 24" fill="none" stroke="#757575" strokeWidth="1.900">
    <ellipse cx="12.800" cy="9.300" rx="10" ry="7.900" transform="rotate(-10 12.800 9.300)" />
    <circle cx="6.500" cy="15.400" r="3.200" strokeWidth="1.500" />
    <path d="M7.500 16c2.500 2 .500 4-1.800 7" strokeWidth="1.500" />
  </svg>
);

const MoveIcon = () => (
  <svg width="24" height="24" viewBox="0 0 24 24" fill="#cf2f55">
    <path d="M10.800 3h2.400v7.800H21v2.400h-7.800V21h-2.400v-7.800H3v-2.400h7.800zM12 0l4.500 5h-9zM12 24l-4.500-5h9zM0 12l5-4.500v9zM24 12l-5 4.500v-9z" />
  </svg>
);

/* ------------------------------------------------------------------ */
/* Components                                                           */
/* ------------------------------------------------------------------ */

const SpotPlot = ({ paths, size, ...svg }) => (
  <svg {...svg} fill="none" strokeLinecap="round" strokeWidth={size}>
    {paths.map((d, i) => (
      <path key={i} d={d} stroke={CLUSTERS[i].color} />
    ))}
  </svg>
);

const NAV = [
  ['Mapping', 185.5, 0.1],
  ['Datasets', 194, 0.25],
  ['Search', 169, 0],
  ['Tutorial', 172, 0],
  ['Help', 144, 0],
  ['About', 158, 0],
  ['Contact', 179, 0.15],
];

const SIDE = ['Summary', 'Sample', 'Sections', 'Features', 'View', 'Source', 'Download'];

const PickField = ({ mt, arrow, children }) => (
  <Field $mt={mt}>
    {children}
    <Arrow $mt={arrow} />
  </Field>
);

const OutlinedSelect = ({ label, value, notch, focus, mt }) => (
  <Outlined $focus={focus} $mt={mt}>
    <Legend $w={notch} $focus={focus}>{label}</Legend>
    {value}
    <Arrow />
  </Outlined>
);

const ControlPanel = () => (
  <Controls>
    <Heading $ls={1.3}>EXPLORE</Heading>
    <PickField mt={17} arrow={16}>Embeddings</PickField>
    <Chip $mt={8} $pl={13}>spatial<MdCancel size={25} /></Chip>
    <PickField mt={12} arrow={15}>Genes/Features</PickField>
    <Hint>Enter or paste list</Hint>
    <PickField mt={24} arrow={16}>Cell Metadata</PickField>
    <Chip $mt={8} $pl={8}><TypeBadge>A</TypeBadge>leiden0.5<MdCancel size={25} /></Chip>
    <PickField mt={13} arrow={16}>Sets</PickField>
    <Line $mt={6} />
    <Heading $mt={3}>FILTERS</Heading>
    <CombineRow>
      <CombineLabel>Combine</CombineLabel>
      AND
      <Switch $small />
      OR
    </CombineRow>
    <Line $mt={0} />
    <Heading $mt={3}>VIEW</Heading>
    <Small $mt={6}>Opacity</Small>
    <Slider $mt={24}>
      <Filled $w={240} />
      <Knob />
    </Slider>
    <Small $mt={14}>Filtered Marker Opacity</Small>
    <Slider $mt={24}>
      <Filled $w={24} />
      <Knob />
      <Rest />
    </Slider>
    <OutlinedSelect label="Marker Size" value="100%" notch={120} focus mt={8} />
    <OutlinedSelect label="Filtered Marker Size" value="100%" notch={191} mt={3} />
    <OutlinedSelect label="Gallery Chart Size" value="Small" notch={174} mt={3} />
    <Small $mt={9}>Color Scheme</Small>
    <SchemeRow>
      <Gradient />
      <Arrow $color="#b8b8b8" $mt={5} />
    </SchemeRow>
    <ReverseRow><Switch />Reverse Colors</ReverseRow>
  </Controls>
);

const ClusterLegend = () => (
  <LegendColumn>
    <LegendTitle>
      leiden0.5
      <Chevron w={12} h={8} color="#222" sw={2.6} flip />
    </LegendTitle>
    {CLUSTERS.map((c) => (
      <LegendRow key={c.id}>
        <Swatch $color={c.color} />
        <LegendText>
          <b>{c.id}</b>
          {c.count}
        </LegendText>
        <RowArrow $mt={19} />
      </LegendRow>
    ))}
  </LegendColumn>
);

export default function App() {
  const paths = useMemo(buildSpots, []);
  return (
    <Page>
      <GlobalStyle />
      <Header>
        <Pager>
          <PagerItem $faint><SideChevron left /></PagerItem>
          <PagerItem $boxed>1</PagerItem>
          <PagerItem>2</PagerItem>
          <PagerItem>3</PagerItem>
          <PagerItem>4</PagerItem>
          <PagerItem>5</PagerItem>
          <PagerItem $w={51} $faint>•••</PagerItem>
          <PagerItem $w={51}>92</PagerItem>
          <PagerItem><SideChevron /></PagerItem>
          <PagerSize>
            10 / page
            <Chevron w={15} h={11} color="#1b1b1b" />
          </PagerSize>
        </Pager>
        <Logo>STELLARIS</Logo>
        <Nav>
          {NAV.map(([label, w, ls]) => (
            <NavItem key={label} $w={w} $ls={ls} $active={label === 'Datasets'}>{label}</NavItem>
          ))}
        </Nav>
      </Header>
      <Body>
        <Side>
          {SIDE.map((label) => (
            <SideItem key={label} $active={label === 'View'}>{label}</SideItem>
          ))}
        </Side>
        <Main>
          <TitleRow>
            <Title>View</Title>
            <TitleIcon><QuestionIcon /></TitleIcon>
            <Rule />
          </TitleRow>
          <FormRow>
            <FormLabel>Section ID:</FormLabel>
            <SelectBox>coronal_1<Chevron /></SelectBox>
          </FormRow>
          <Panel>
            <PanelBar>
              <Menu><MenuIcon /></Menu>
              <Spots>11,637 spots</Spots>
              <Info><InfoIcon /></Info>
              <span>STW-M-Brain-Stereo-seq-1 | coronal_1</span>
              <Tabs>
                <Tab $w={185} $active $ls={0.3}>EMBEDDINGS</Tab>
                <Tab $w={203} $ls={0.25}>DISTRIBUTIONS</Tab>
              </Tabs>
              <BarIcons>
                <MoonIcon />
                <MdHelp size={24} />
              </BarIcons>
            </PanelBar>
            <PanelBody>
              <ControlPanel />
              <Workspace>
                <Stage>
                  <PlotColumn>
                    <Tools>
                      <MdHome size={24} />
                      <LassoIcon />
                      <MdPhotoSizeSelectSmall size={24} />
                      <MoveIcon />
                      <MdPhotoCamera size={24} />
                    </Tools>
                    <SpotPlot paths={paths} size={7.1} width="1290" height="960" viewBox="975 460 1290 960" />
                  </PlotColumn>
                  <ClusterLegend />
                </Stage>
                <Gallery>
                  <Card>
                    <CardTitle>leiden0.5</CardTitle>
                    <SpotPlot paths={paths} size={12} width="289" height="219" viewBox="936.3 438 1387.2 1051.2" />
                  </Card>
                </Gallery>
              </Workspace>
            </PanelBody>
          </Panel>
        </Main>
      </Body>
      <UpButton>UP</UpButton>
    </Page>
  );
}
